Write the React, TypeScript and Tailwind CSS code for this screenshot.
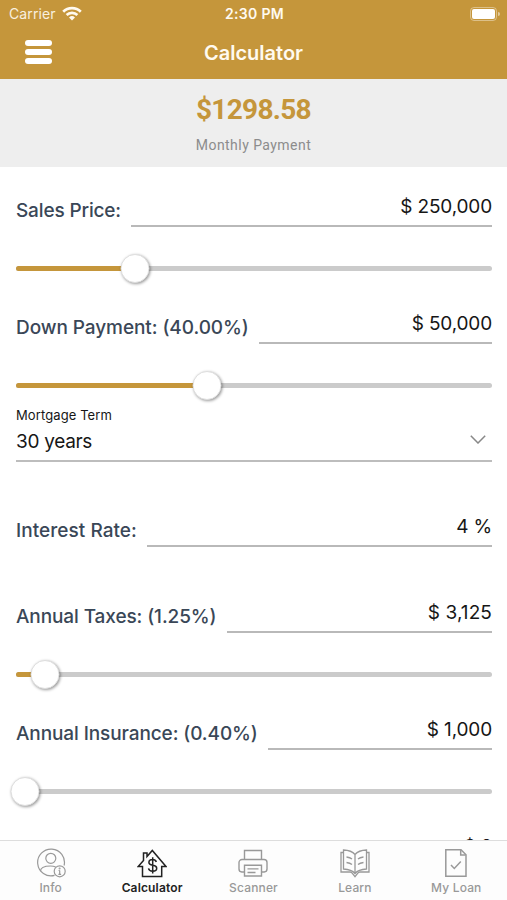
import React from 'react';

interface MoneyFieldProps {
    label: string;
    value: string;
    labelClass?: string;
    valueClass?: string;
}

const MoneyField: React.FC<MoneyFieldProps> = ({ label, value, labelClass = 'tracking-[-0.1px]', valueClass = 'tracking-[-0.15px]' }) => (
    <div className="flex h-10 items-stretch">
        <label className={`shrink-0 whitespace-nowrap pt-[10px] text-[19px] font-[450] leading-7 text-[#3a4757] ${labelClass}`}>
            {label}
        </label>
        <div className={`flex-1 border-b-2 border-[#b9b9b9] pt-1.5 text-right text-[19px] leading-7 text-[#161616] ${valueClass}`}>
            {value}
        </div>
    </div>
);

const Slider: React.FC<{ filled: number; thumb: number }> = ({ filled, thumb }) => (
    <div className="relative flex h-[29px] items-center">
        <div className="h-[5px] w-full overflow-hidden rounded-full bg-[#cbcbcb]">
            <div className="h-full bg-[#c5963b]" style={{ width: filled }}></div>
        </div>
        <div
            className="absolute top-0 size-[29px] -translate-x-1/2 rounded-full border border-[#dedede] bg-white shadow-[1px_1px_3px_rgba(0,0,0,0.4)]"
            style={{ left: thumb }}
        ></div>
    </div>
);

const InfoIcon = () => (
    <svg viewBox="0 0 30 30" className="size-[30px]" fill="none" stroke="currentColor" strokeWidth="1.2">
        <path d="M18.500 27.400A13.400 13.400 0 1 1 28.100 17.500" />
        <circle cx="14.800" cy="10.300" r="5" />
        <path d="M4.500 23.200c0-3.400 3.700-5.200 10-5.200 2 0 3.700.300 5.200 1" />
        <circle cx="23.700" cy="23.300" r="5.500" />
        <path d="M23.700 22.500v4M22.600 22.500h1.100M22.400 26.300h2.700" />
        <circle cx="23.600" cy="20.500" r=".4" />
    </svg>
);

const HouseIcon = () => (
    <svg viewBox="0 0 30 30" className="size-[30px]" fill="none" stroke="currentColor" strokeWidth="1.5">
        <path d="M5.500 18.500H1.200L6.500 12.500V5h3.500v3.500L15.300 2.500l13.700 16h-4.300v10H5.500z" />
        <path d="M19.300 13.900c-.5-1.500-1.700-2.300-3.700-2.300-2.300 0-3.700 1-3.700 2.900 0 4.200 7.800 1.500 7.800 5.700 0 2-1.600 3-4 3-2.300 0-3.800-1-4.200-2.900M15.700 9.200v16.300" />
    </svg>
);

const PrinterIcon = () => (
    <svg viewBox="0 0 30 30" className="size-[30px]" fill="none" stroke="currentColor" strokeWidth="1.4">
        <path d="M6.500 11.500V2.500h17v9" />
        <path d="M6.500 24H3.800A3 3 0 0 1 1 21v-6.500a3 3 0 0 1 3-3h22a3 3 0 0 1 3 3V21a3 3 0 0 1-2.800 3h-2.700" />
        <path d="M6.500 17.300h17v10.700h-17zM9.500 20.900h11M9.500 24.500h8" />
    </svg>
);

const BookIcon = () => (
    <svg viewBox="0 0 30 30" className="size-[30px]" fill="none" stroke="currentColor" strokeWidth="1.3">
        <path d="M3.500 2c5.500.2 9 1.500 11.500 4.500C17.500 3.500 21 2.200 26.500 2v19c-5.500.3-9 1.500-11.500 4.500-2.500-3-6-4.200-11.500-4.500zM15 6.500v19" />
        <path d="M3.500 4.500H1v19.500h9.300c1.600 0 2 .8 2.700 2.200l2 2.500 2-2.500c.7-1.400 1.100-2.200 2.700-2.200H29V4.500h-2.500" />
        <path d="M6.500 9c2.500.3 4.300 1 5.500 2M6.500 14.500c2.500.3 4.300 1 5.500 2M23.500 9c-2.500.3-4.300 1-5.500 2M23.500 14.500c-2.500.3-4.300 1-5.500 2" />
    </svg>
);

const LoanIcon = () => (
    <svg viewBox="0 0 30 30" className="size-[30px]" fill="none" stroke="currentColor" strokeWidth="1.5">
        <path d="M4.800 1.800h15.200l5 5v21.400H4.800z" />
        <path d="M19.700 2v5h5" />
        <path d="M10 17l3.300 3.400 6.500-7" />
    </svg>
);

const tabs = [
    { name: 'Info', icon: InfoIcon, active: false },
    { name: 'Calculator', icon: HouseIcon, active: true },
    { name: 'Scanner', icon: PrinterIcon, active: false },
    { name: 'Learn', icon: BookIcon, active: false },
    { name: 'My Loan', icon: LoanIcon, active: false }
];

const App: React.FC = () => {
    return (
        <div className="flex h-[900px] w-[507px] flex-col overflow-hidden bg-white font-['Inter','Liberation_Sans',sans-serif]">
            {/* Status bar and title */}
            <header className="h-[79px] shrink-0 bg-[#c5963b] text-[#fffaf0]">
                <div className="grid h-[27px] grid-cols-3 items-center pl-[9px] pr-[7px]">
                    <div className="flex items-center gap-1.5 text-[14px]">
                        <span className="tracking-[0.1px] opacity-90">Carrier</span>
                        <svg viewBox="0 0 20 15" className="h-[15px] w-5" fill="none" stroke="currentColor" strokeWidth="2.700">
                            <path d="M1.200 5.700a12.600 12.600 0 0 1 17.600 0M4.600 9a7.800 7.800 0 0 1 10.800 0" />
                            <path d="M7 11.500a4.300 4.300 0 0 1 6 0L10 14.600z" fill="currentColor" stroke="none" />
                        </svg>
                    </div>
                    <span className="text-center text-[14px] font-semibold tracking-[0.3px]">2:30 PM</span>
                    <div className="flex items-center justify-end gap-px">
                        <div className="h-[14px] w-[27px] rounded-[4px] border border-white/40 p-px">
                            <div className="h-full rounded-[2px] bg-white"></div>
                        </div>
                        <div className="h-1 w-0.5 rounded-r-full bg-white/50"></div>
                    </div>
                </div>
                <div className="grid h-[50px] grid-cols-3 items-center px-[25px]">
                    <div className="flex w-[27px] flex-col gap-[3px]">
                        <span className="h-1.5 rounded-full bg-white"></span>
                        <span className="h-1.5 rounded-full bg-white"></span>
                        <span className="h-1.5 rounded-full bg-white"></span>
                    </div>
                    <h1 className="pt-px text-center text-[20px] font-semibold tracking-[0px]">Calculator</h1>
                </div>
            </header>

            {/* Monthly payment */}
            <section className="flex h-[88px] shrink-0 flex-col items-center bg-[#eeeeee] pt-[15px] font-['Roboto','Liberation_Sans',sans-serif]">
                <p className="text-[28px] font-bold leading-8 tracking-[-0.7px] text-[#c5963b]">$1298.58</p>
                <p className="mt-[9px] text-[14px] leading-5 tracking-[0.45px] text-[#8c8c8c]">Monthly Payment</p>
            </section>

            {/* Loan form */}
            <main className="min-h-0 flex-1 overflow-hidden pl-4 pr-[15px] pt-5">
                <MoneyField label="Sales Price:" value="$ 250,000" labelClass="w-[115px] tracking-[-0.15px]" />
                <div className="mt-[27px]"><Slider filled={119} thumb={119} /></div>

                <div className="mt-[21px]"><MoneyField label="Down Payment: (40.00%)" value="$ 50,000" labelClass="w-[243px] tracking-[-0.07px]" /></div>
                <div className="mt-[27px]"><Slider filled={190} thumb={190.500} /></div>

                <div className="mt-[7px] flex h-[55px] flex-col border-b-2 border-[#bdbdbd] text-[#161616]">
                    <span className="text-[13px] leading-4 tracking-[0.1px]">Mortgage Term</span>
                    <div className="flex items-center justify-between pr-1.5">
                        <span className="mt-[5px] text-[19px] leading-7 tracking-[-0.3px]">30 years</span>
                        <svg viewBox="0 0 16 9" className="h-[9px] w-4" fill="none" stroke="#888888" strokeWidth="1.500">
                            <path d="M.8.8 8 8l7.200-7.200" />
                        </svg>
                    </div>
                </div>

                <div className="mt-[45px]"><MoneyField label="Interest Rate:" value="4 %" labelClass="w-[131px] tracking-[0.05px]" /></div>

                <div className="mt-[46px]"><MoneyField label="Annual Taxes: (1.25%)" value="$ 3,125" labelClass="w-[211px] tracking-[-0.1px]" valueClass="tracking-[0.1px]" /></div>
                <div className="mt-[27px]"><Slider filled={29} thumb={29} /></div>

                <div className="mt-[21px]"><MoneyField label="Annual Insurance: (0.40%)" value="$ 1,000" labelClass="w-[252px] tracking-[-0.1px]" /></div>
                <div className="mt-[27px]"><Slider filled={0} thumb={9} /></div>

                <div className="mt-[21px]"><MoneyField label="" value="$ 0" labelClass="w-[131px]" valueClass="tracking-[-0.4px]" /></div>
            </main>

            {/* Bottom tabs */}
            <nav className="grid h-[60px] shrink-0 grid-cols-5 border-t border-[#dddddd] bg-[#fdfdfd]">
                {tabs.map(({ name, icon: Icon, active }) => (
                    <div
                        key={name}
                        className={`flex flex-col items-center pt-[7px] ${active ? 'font-semibold text-[#222222]' : 'font-medium text-[#999999]'}`}
                    >
                        <Icon />
                        <span className="mt-0.5 text-[12px] leading-4 tracking-[0.15px]">{name}</span>
                    </div>
                ))}
            </nav>
        </div>
    );
};

export default App;
